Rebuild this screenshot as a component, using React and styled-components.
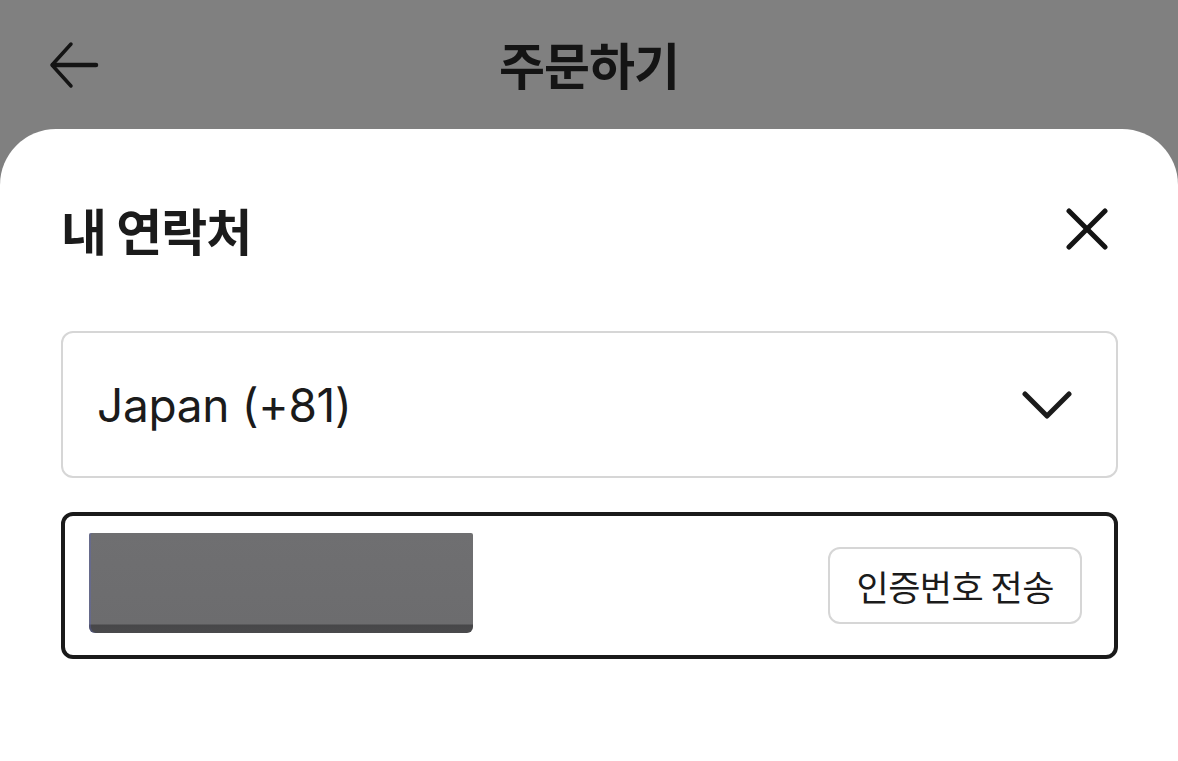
import React from 'react';
import styled, { createGlobalStyle } from 'styled-components';

const GlobalStyle = createGlobalStyle`
  body {
    margin: 0;
    background: #808080;
    font-family: "Inter", "Noto Sans CJK KR", sans-serif;
  }
`

const Page = styled.div`
  width: 1178px;
  height: 761px;
  overflow: hidden;
  background-color: #808080;
  display: flex;
  flex-direction: column;
`

const Header = styled.div`
  height: 129px;
  flex-shrink: 0;
  display: grid;
  grid-template-columns: 1fr auto 1fr;
  align-items: center;
  padding: 0 48px;
  box-sizing: border-box;
`

const IconButton = styled.button`
  border: none;
  background: transparent;
  padding: 0;
  display: flex;
  align-items: center;
  justify-content: center;
  color: #141414;
  justify-self: ${props => props.$end ? 'end' : 'start'};
  margin-right: ${props => props.$end ? '10px' : '0'};
`

const HeaderTitle = styled.h1`
  margin: 0;
  margin-top: -4px;
  font-family: "Noto Sans CJK KR", sans-serif;
  font-size: 50px;
  font-weight: 700;
  color: #141414;
  letter-spacing: -1px;
`

const Sheet = styled.div`
  flex: 1;
  background: #ffffff;
  border-radius: 56px 56px 0 0;
  padding: 70px 60px 0 61px;
  display: flex;
  flex-direction: column;
`

const SheetHead = styled.div`
  height: 60px;
  display: flex;
  align-items: center;
  justify-content: space-between;
  margin-bottom: 72px;
`

const SheetTitle = styled.h2`
  margin: 0;
  font-family: "Noto Sans CJK KR", sans-serif;
  font-size: 50px;
  font-weight: 700;
  color: #1b1b1b;
  letter-spacing: -1px;
`

const Field = styled.div`
  height: 147px;
  box-sizing: border-box;
  border: ${props => props.$active ? '4px solid #1a1a1a' : '2px solid #d6d6d6'};
  border-radius: 12px;
  display: flex;
  align-items: center;
  justify-content: space-between;
  padding: ${props => props.$active ? '0 32px 0 24px' : '0 44px 0 34px'};
  margin-bottom: 34px;
`

const SelectText = styled.span`
  font-family: "Inter", "Noto Sans CJK KR", sans-serif;
  font-size: 46px;
  color: #1b1b1b;
  letter-spacing: -0.3px;
`

const Redacted = styled.div`
  width: 384px;
  height: 100px;
  margin-bottom: 5px;
  background: linear-gradient(180deg, #6f6f71 0%, #6c6c6e 91%, #474749 92%, #4a4a4c 100%);
  border-radius: 2px 2px 6px 6px;
  box-shadow: inset 2px 0 0 rgba(90, 100, 190, 0.35);
`

const SendButton = styled.button`
  height: 77px;
  padding: 0 26px;
  border: 2px solid #d6d6d6;
  border-radius: 12px;
  background: #ffffff;
  font-family: "Noto Sans CJK KR", sans-serif;
  font-size: 35px;
  color: #1b1b1b;
  letter-spacing: -0.5px;
`

const ArrowLeft = () => (
  <svg width="52" height="52" viewBox="0 0 52 52" fill="none" stroke="currentColor" strokeWidth="4.5" strokeLinecap="round" strokeLinejoin="round">
    <path d="M48 26H5" />
    <path d="M23 5L4 26L23 47" strokeWidth="3.5" />
  </svg>
)

const CloseIcon = () => (
  <svg width="42" height="42" viewBox="0 0 42 42" fill="none" stroke="currentColor" strokeWidth="5" strokeLinecap="round">
    <path d="M3 3L39 39" />
    <path d="M39 3L3 39" />
  </svg>
)

const Chevron = () => (
  <svg width="50" height="28" viewBox="0 0 50 28" fill="none" stroke="#1b1b1b" strokeWidth="5" strokeLinecap="round" strokeLinejoin="round">
    <path d="M3 3L25 25L47 3" />
  </svg>
)

export default function App() {
  return (
    <Page>
      <GlobalStyle />
      <Header>
        <IconButton aria-label="back">
          <ArrowLeft />
        </IconButton>
        <HeaderTitle>주문하기</HeaderTitle>
        <span />
      </Header>
      <Sheet>
        <SheetHead>
          <SheetTitle>내 연락처</SheetTitle>
          <IconButton $end aria-label="close">
            <CloseIcon />
          </IconButton>
        </SheetHead>
        <Field>
          <SelectText>Japan (+81)</SelectText>
          <Chevron />
        </Field>
        <Field $active>
          <Redacted />
          <SendButton>인증번호 전송</SendButton>
        </Field>
      </Sheet>
    </Page>
  );
}
